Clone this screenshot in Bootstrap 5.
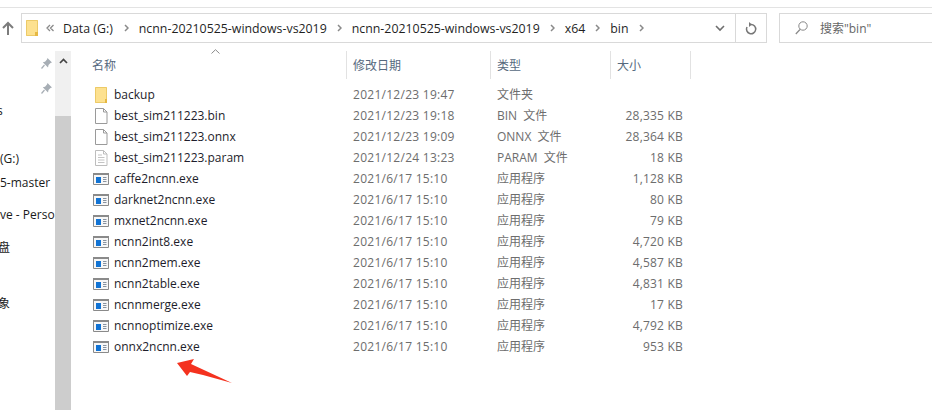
<!DOCTYPE html>
<html lang="zh">
<head>
<meta charset="utf-8">
<title>bin</title>
<link href="https://cdn.jsdelivr.net/npm/bootstrap@5.3.0/dist/css/bootstrap.min.css" rel="stylesheet">
<style>
html,body{height:410px;overflow:hidden;background:#fff}
body{font-family:"Open Sans","Noto Sans CJK SC",sans-serif;font-size:12px;line-height:21px;color:#1a1a1a;position:relative}
.topline{height:1px;background:#e3e3e3;margin-top:7px}
.addr-row{height:30px;margin-top:5px}
.up-btn{width:21px;padding-left:2px}
.addr-box{width:746px;height:30px;border:1px solid #d9d9d9;padding-left:4px}
.addr-path{font-size:12.35px;color:#1f1f1f;white-space:nowrap}
.chev{flex:none}
.crumb{margin-left:10px;margin-right:10px}
.refresh{width:31px;border-left:1px solid #d9d9d9}
.drop{width:30px}
.search-box{width:153px;height:30px;border:1px solid #d9d9d9;border-right:0;margin-left:12px;padding-left:15px;color:#666;gap:12px}
.content{height:367px}
.side{width:55px;overflow:hidden;white-space:nowrap;position:relative}
.side-line{height:21px}
.pin{position:absolute;left:41px}
.scroll{width:16px;background:#f0f0f0;margin-top:8px}
.scroll-top{height:20px}
.scroll-thumb{background:#cdcdcd}
.listing{width:860px;padding-left:1px}
.heads{height:27px;margin-top:8px;color:#56697e;display:grid;grid-template-columns:262px 144px 120px 80px;margin-left:13px;position:relative}
.heads>div{border-right:1px solid #e2e2e2;padding-left:7px;padding-top:1px;line-height:27px}
.heads>div+div{padding-left:6px}
.sort{position:absolute;left:126px;top:-2px}
.files{margin-top:6px}
.frow{display:grid;grid-template-columns:260px 144px 186px;height:21px;margin-left:21px;color:#6d6d6d}
.fname{display:flex;align-items:center;color:#1d1d2b;gap:5px}
.fname svg{flex:none}
.fdate{letter-spacing:.27px}
.ftype{word-spacing:3px}
.fsize{letter-spacing:.2px}
.red-arrow{position:absolute;left:176px;top:358px}
</style>
</head>
<body>
<svg width="0" height="0" class="position-absolute">
  <defs>
    <symbol id="ic-folder" viewBox="0 0 16 16"><path d="M2 0h12v16H2z" fill="#fde18f"/><path d="M2.500.5h11v15h-11z" fill="none" stroke="#ecca68"/><path d="M12 12h2v4h-2z" fill="#e6b843"/></symbol>
    <symbol id="ic-file" viewBox="0 0 16 16"><path d="M2.500.5h8l3.500 3.500v11.500H2.500z" fill="#fff" stroke="#9a9a9a"/><path d="M10.500.5V4H14" fill="none" stroke="#9a9a9a"/></symbol>
    <symbol id="ic-param" viewBox="0 0 16 16"><path d="M2.500.5h8l3.500 3.500v11.500H2.500z" fill="#fff" stroke="#bdbdbd"/><path d="M10.500.5V4H14" fill="none" stroke="#bdbdbd"/><path d="M5 5h4M5 7.500h6.500M5 10h6.500M5 12.500h6.500" stroke="#c4c4c4"/></symbol>
    <symbol id="ic-exe" viewBox="0 0 16 12"><path d="M.5.500h15v11H.5z" fill="#f7f7f7" stroke="#8a8a8a"/><path d="M0 0h16v2H0z" fill="#8a8a8a"/><path d="M3 4h5v6H3z" fill="#1173d4"/><path d="M10 4.500h3.500M10 6.500h3.500M10 8.500h3.500" stroke="#8792a0"/></symbol>
    <symbol id="ic-chev" viewBox="0 0 5 8"><path d="M1 1l3 3-3 3" fill="none" stroke="#8a8a8a" stroke-width="1.500"/></symbol>
    <symbol id="ic-pin" viewBox="0 0 11 11"><path d="M6.500 0L11 4.500 9.500 5 7.500 7 7 9.500 1.800 4.300 4 3.700 6 1.500z" fill="#a7aeb5"/><path d="M3.500 7L.5 10.500" stroke="#a7aeb5" stroke-width="1.200"/></symbol>
  </defs>
</svg>
<div class="topline"></div>
<div class="addr-row d-flex">
  <div class="up-btn d-flex align-items-center">
    <svg width="12" height="14" viewBox="0 0 12 14"><path d="M6 14V2M1 7l5-5 5 5" fill="none" stroke="#7c7c7c" stroke-width="2"/></svg>
  </div>
  <div class="addr-box d-flex align-items-center">
    <svg width="12" height="16" viewBox="0 0 12 16"><path d="M0 0h12v16H0z" fill="#fde18f"/><path d="M.5.500h11v15H.5z" fill="none" stroke="#ecca68"/><path d="M9 12h3v4H9z" fill="#e6b843"/></svg>
    <div class="addr-path d-flex align-items-center flex-grow-1">
      <svg width="8" height="8" viewBox="0 0 8 8" style="margin-left:8px;flex:none"><path d="M4 1L1 4l3 3M7.500 1l-3 3 3 3" fill="none" stroke="#8a8a8a" stroke-width="1.300"/></svg>
      <span style="margin-left:9px;margin-right:11px">Data (G:)</span>
      <svg class="chev" width="5" height="8"><use href="#ic-chev"/></svg>
      <span class="crumb">ncnn-20210525-windows-vs2019</span>
      <svg class="chev" width="5" height="8"><use href="#ic-chev"/></svg>
      <span class="crumb">ncnn-20210525-windows-vs2019</span>
      <svg class="chev" width="5" height="8"><use href="#ic-chev"/></svg>
      <span class="crumb">x64</span>
      <svg class="chev" width="5" height="8"><use href="#ic-chev"/></svg>
      <span class="crumb">bin</span>
      <svg class="chev" width="5" height="8"><use href="#ic-chev"/></svg>
    </div>
    <div class="drop d-flex justify-content-center">
      <svg width="10" height="7" viewBox="0 0 10 7"><path d="M1 1l4 4 4-4" fill="none" stroke="#6f6f6f" stroke-width="1.600"/></svg>
    </div>
    <div class="refresh d-flex justify-content-center align-items-center align-self-stretch">
      <svg width="12" height="13" viewBox="0 0 12 13"><path d="M6 2.500A4.600 4.600 0 1 1 2 5" fill="none" stroke="#777" stroke-width="1.500"/><path d="M4 0l3 2.500L4 5z" fill="#777"/></svg>
    </div>
  </div>
  <div class="search-box d-flex align-items-center">
    <svg width="13" height="14" viewBox="0 0 13 14"><circle cx="8" cy="5" r="4.200" fill="none" stroke="#888"/><path d="M5 8.500L.8 13" stroke="#888" stroke-width="1.200"/></svg>
    <span>搜索"bin"</span>
  </div>
</div>
<div class="content d-flex">
  <div class="side">
    <div style="height:57px"></div>
    <div class="side-line" style="margin-left:-3px">s</div>
    <div style="height:27px"></div>
    <div class="side-line">(G:)</div>
    <div style="height:3px"></div>
    <div class="side-line">5-master</div>
    <div style="height:11px"></div>
    <div class="side-line">ve - Personal</div>
    <div style="height:12px"></div>
    <div class="side-line" style="margin-left:-2px">盘</div>
    <div style="height:35px"></div>
    <div class="side-line" style="margin-left:-2px">象</div>
    <svg class="pin" style="top:15px" width="11" height="11"><use href="#ic-pin"/></svg>
    <svg class="pin" style="top:40px" width="11" height="11"><use href="#ic-pin"/></svg>
  </div>
  <div class="scroll d-flex flex-column">
    <div class="scroll-top d-flex justify-content-center align-items-center">
      <svg width="9" height="6" viewBox="0 0 9 6"><path d="M1 5l3.500-3.500L8 5" fill="none" stroke="#444" stroke-width="1.700"/></svg>
    </div>
    <div style="height:45px"></div>
    <div class="scroll-thumb flex-grow-1"></div>
  </div>
  <div class="listing">
    <div class="heads">
      <div>名称</div><div>修改日期</div><div>类型</div><div>大小</div>
      <svg class="sort" width="9" height="5" viewBox="0 0 9 5"><path d="M.5 4.500L4.500.7l4 3.800" fill="none" stroke="#8a8a8a"/></svg>
    </div>
    <div class="files">
      <div class="frow"><div class="fname"><svg width="16" height="16"><use href="#ic-folder"/></svg>backup</div><div class="fdate">2021/12/23 19:47</div><div>文件夹</div></div>
      <div class="frow"><div class="fname"><svg width="16" height="16"><use href="#ic-file"/></svg>best_sim211223.bin</div><div class="fdate">2021/12/23 19:18</div><div class="d-flex justify-content-between"><span class="ftype">BIN 文件</span><span class="fsize">28,335 KB</span></div></div>
      <div class="frow"><div class="fname"><svg width="16" height="16"><use href="#ic-file"/></svg>best_sim211223.onnx</div><div class="fdate">2021/12/23 19:09</div><div class="d-flex justify-content-between"><span class="ftype">ONNX 文件</span><span class="fsize">28,364 KB</span></div></div>
      <div class="frow"><div class="fname"><svg width="16" height="16"><use href="#ic-param"/></svg>best_sim211223.param</div><div class="fdate">2021/12/24 13:23</div><div class="d-flex justify-content-between"><span class="ftype">PARAM 文件</span><span class="fsize">18 KB</span></div></div>
      <div class="frow"><div class="fname"><svg width="16" height="12"><use href="#ic-exe"/></svg>caffe2ncnn.exe</div><div class="fdate">2021/6/17 15:10</div><div class="d-flex justify-content-between"><span>应用程序</span><span class="fsize">1,128 KB</span></div></div>
      <div class="frow"><div class="fname"><svg width="16" height="12"><use href="#ic-exe"/></svg>darknet2ncnn.exe</div><div class="fdate">2021/6/17 15:10</div><div class="d-flex justify-content-between"><span>应用程序</span><span class="fsize">80 KB</span></div></div>
      <div class="frow"><div class="fname"><svg width="16" height="12"><use href="#ic-exe"/></svg>mxnet2ncnn.exe</div><div class="fdate">2021/6/17 15:10</div><div class="d-flex justify-content-between"><span>应用程序</span><span class="fsize">79 KB</span></div></div>
      <div class="frow"><div class="fname"><svg width="16" height="12"><use href="#ic-exe"/></svg>ncnn2int8.exe</div><div class="fdate">2021/6/17 15:10</div><div class="d-flex justify-content-between"><span>应用程序</span><span class="fsize">4,720 KB</span></div></div>
      <div class="frow"><div class="fname"><svg width="16" height="12"><use href="#ic-exe"/></svg>ncnn2mem.exe</div><div class="fdate">2021/6/17 15:10</div><div class="d-flex justify-content-between"><span>应用程序</span><span class="fsize">4,587 KB</span></div></div>
      <div class="frow"><div class="fname"><svg width="16" height="12"><use href="#ic-exe"/></svg>ncnn2table.exe</div><div class="fdate">2021/6/17 15:10</div><div class="d-flex justify-content-between"><span>应用程序</span><span class="fsize">4,831 KB</span></div></div>
      <div class="frow"><div class="fname"><svg width="16" height="12"><use href="#ic-exe"/></svg>ncnnmerge.exe</div><div class="fdate">2021/6/17 15:10</div><div class="d-flex justify-content-between"><span>应用程序</span><span class="fsize">17 KB</span></div></div>
      <div class="frow"><div class="fname"><svg width="16" height="12"><use href="#ic-exe"/></svg>ncnnoptimize.exe</div><div class="fdate">2021/6/17 15:10</div><div class="d-flex justify-content-between"><span>应用程序</span><span class="fsize">4,792 KB</span></div></div>
      <div class="frow"><div class="fname"><svg width="16" height="12"><use href="#ic-exe"/></svg>onnx2ncnn.exe</div><div class="fdate">2021/6/17 15:10</div><div class="d-flex justify-content-between"><span>应用程序</span><span class="fsize">953 KB</span></div></div>
    </div>
  </div>
</div>
<svg class="red-arrow" width="57" height="26" viewBox="0 0 57 26"><path d="M1 5L18 1 15 6 56 25 27 17 14 14 11 18z" fill="#f4321f"/></svg>
</body>
</html>
